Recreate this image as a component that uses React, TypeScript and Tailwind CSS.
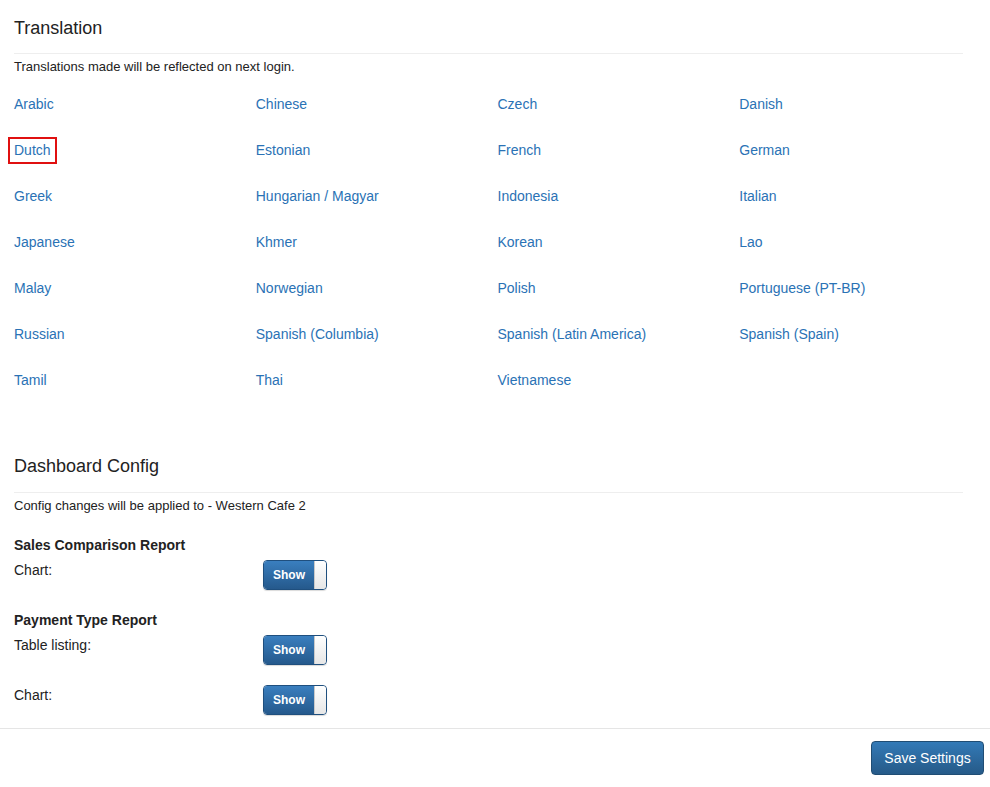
import React from 'react';

const languages = [
  'Arabic', 'Chinese', 'Czech', 'Danish',
  'Dutch', 'Estonian', 'French', 'German',
  'Greek', 'Hungarian / Magyar', 'Indonesia', 'Italian',
  'Japanese', 'Khmer', 'Korean', 'Lao',
  'Malay', 'Norwegian', 'Polish', 'Portuguese (PT-BR)',
  'Russian', 'Spanish (Columbia)', 'Spanish (Latin America)', 'Spanish (Spain)',
  'Tamil', 'Thai', 'Vietnamese',
];

function Toggle() {
  return (
    <div className="flex h-[30px] w-[64px] overflow-hidden rounded-[4px] border border-[#1f4f7e] shadow-[0_1px_1px_rgba(0,0,0,0.15)]">
      <div className="flex flex-1 items-center justify-center bg-gradient-to-b from-[#3a7fbf] to-[#25598c] text-[12px] font-bold text-white">
        Show
      </div>
      <div className="w-[12px] rounded-r-[3px] border-l border-[#c9c9c9] bg-gradient-to-b from-[#ffffff] to-[#e6e6e6]" />
    </div>
  );
}

function ConfigRow({ label }: { label: string }) {
  return (
    <div className="flex items-start">
      <div className="w-[249px] text-[14px] leading-[20px]">{label}</div>
      <Toggle />
    </div>
  );
}

export default function App() {
  return (
    <div className="min-h-[787px] bg-white font-['Liberation_Sans',Arial,sans-serif] text-[#222]">
      <div className="px-[14px] pt-[17px]">
        {/* Translation */}
        <h2 className="text-[18px] leading-[22px] text-[#222]">Translation</h2>
        <div className="mt-[14px] mr-[13px] border-t border-[#eeeeee]" />
        <p className="mt-[5px] text-[13px] leading-[16px]">Translations made will be reflected on next login.</p>

        <div className="mt-[16px] -mr-[5px] grid grid-cols-4">
          {languages.map((lang) => (
            <div key={lang} className="h-[46px]">
              <a
                href="#"
                className={
                  lang === 'Dutch'
                    ? '-ml-[6px] inline-block border-2 border-[#e01010] px-[4px] py-[3px] text-[14px] leading-[17px] text-[#2a72b5]'
                    : 'inline-block py-[5px] text-[14px] leading-[17px] text-[#2a72b5]'
                }
              >
                {lang}
              </a>
            </div>
          ))}
        </div>

        {/* Dashboard Config */}
        <h2 className="mt-[42px] text-[18px] leading-[22px] text-[#222]">Dashboard Config</h2>
        <div className="mt-[15px] mr-[13px] border-t border-[#eeeeee]" />
        <p className="mt-[5px] text-[13px] leading-[16px]">Config changes will be applied to - Western Cafe 2</p>

        <h4 className="mt-[23px] text-[14px] font-bold leading-[16px]">Sales Comparison Report</h4>
        <div className="mt-[7px]">
          <ConfigRow label="Chart:" />
        </div>

        <h4 className="mt-[22px] text-[14px] font-bold leading-[16px]">Payment Type Report</h4>
        <div className="mt-[7px]">
          <ConfigRow label="Table listing:" />
        </div>
        <div className="mt-[20px]">
          <ConfigRow label="Chart:" />
        </div>
      </div>

      {/* Footer */}
      <div className="mt-[13px] flex justify-end border-t border-[#e5e5e5] pt-[12px] pr-[6px]">
        <button className="h-[34px] w-[113px] rounded-[4px] border border-[#204d74] bg-gradient-to-b from-[#337ab7] to-[#265a88] text-[14px] text-white">
          Save Settings
        </button>
      </div>
    </div>
  );
}
